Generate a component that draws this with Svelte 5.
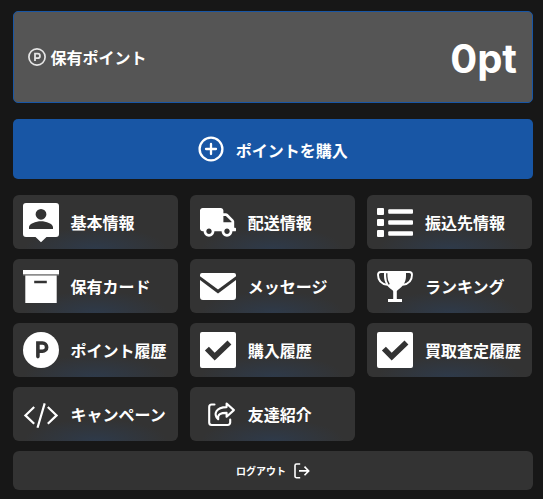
<script lang="ts">
  // My page menu: point balance, purchase button, menu tiles and logout.
  interface MenuItem {
    icon: string;
    label: string;
  }

  const points = 0;

  const items: MenuItem[] = [
    { icon: 'profile', label: '基本情報' },
    { icon: 'truck', label: '配送情報' },
    { icon: 'list', label: '振込先情報' },
    { icon: 'box', label: '保有カード' },
    { icon: 'mail', label: 'メッセージ' },
    { icon: 'trophy', label: 'ランキング' },
    { icon: 'point', label: 'ポイント履歴' },
    { icon: 'check', label: '購入履歴' },
    { icon: 'check', label: '買取査定履歴' },
    { icon: 'code', label: 'キャンペーン' },
    { icon: 'share', label: '友達紹介' },
  ];
</script>

{#snippet icon(name: string)}
  <svg class="icon" viewBox="0 0 36 36" fill="currentColor" aria-hidden="true">
    {#if name === 'profile'}
      <path fill-rule="evenodd" d="M3-1h30a3 3 0 0 1 3 3v28a3 3 0 0 1-3 3h-9.500l-5.500 5.300-5.500-5.300H3a3 3 0 0 1-3-3V2a3 3 0 0 1 3-3zM18 4.900a5.400 5.400 0 1 0 0 10.800 5.400 5.400 0 0 0 0-10.800zM6 25h24v-1.800c0-3.600-7-6-12-6s-12 2.400-12 6z" />
    {:else if name === 'truck'}
      <path transform="translate(0 3.900) scale(.05625)" d="M624 352h-16V243.900c0-12.700-5.100-24.900-14.100-33.900L494 110.100c-9-9-21.200-14.100-33.900-14.100H416V48c0-26.500-21.500-48-48-48H48C21.500 0 0 21.500 0 48v320c0 26.500 21.500 48 48 48h16c0 53 43 96 96 96s96-43 96-96h128c0 53 43 96 96 96s96-43 96-96h48c8.800 0 16-7.200 16-16v-32c0-8.800-7.200-16-16-16zM160 464c-26.500 0-48-21.500-48-48s21.500-48 48-48 48 21.500 48 48-21.500 48-48 48zm320 0c-26.500 0-48-21.500-48-48s21.500-48 48-48 48 21.500 48 48-21.500 48-48 48zm80-208H416V144h44.100l99.900 99.900V256z" />
    {:else if name === 'list'}
      {#each [4, 15, 26] as y}
        <rect x="0" {y} width="7" height="7" rx="1" />
        <rect x="11.200" y={y + 1.200} width="24.800" height="4.500" rx="1" />
      {/each}
    {:else if name === 'box'}
      <path d="M0 2h36v4.300H0z" />
      <path opacity=".35" d="M0 6.300h36v1.200H0z" />
      <path fill-rule="evenodd" d="M2.300 7.500h31.400V35H2.300zM11.200 12.800v2.500h12.600v-2.500z" />
    {:else if name === 'mail'}
      <path d="M2 5h32a2 2 0 0 1 2 2v1.300L18 21.600 0 8.300V7a2 2 0 0 1 2-2z" />
      <path d="M0 12l18 13.400L36 12v17a3 3 0 0 1-3 3H3a3 3 0 0 1-3-3z" />
    {:else if name === 'trophy'}
      <path d="M7 3h22v5c0 6-3 10.500-8.500 14.300-.7.500-.7 1-.7 1.700v7H25v3H11v-3h5.200v-7c0-.7 0-1.200-.7-1.700C10 18.500 7 14 7 8z" />
      <path class="line" stroke-width="1.900" d="M8 4H3.700C1.900 4 1 4.900 1 6.700c0 5.300 3.200 9.300 9.600 10.200M28 4h4.300C34.100 4 35 4.900 35 6.700c0 5.300-3.200 9.300-9.600 10.200" />
      <path class="cut" stroke-width="1.300" d="M9.800 5.200v3c0 3.300.8 5.800 2.400 8.200" />
    {:else if name === 'point'}
      <circle cx="18" cy="18" r="18" />
      <path class="cut" stroke-width="3.600" stroke-linecap="round" d="M14.900 24.600V11h4.600a4.100 4.100 0 0 1 0 8.300h-4.600" />
    {:else if name === 'check'}
      <path fill-rule="evenodd" d="M2 0h32a2 2 0 0 1 2 2v32a2 2 0 0 1-2 2H2a2 2 0 0 1-2-2V2a2 2 0 0 1 2-2zM4.900 18.600l9.800 9.800L31.400 12.400l-3.900-4-12.800 12.300L8.900 14.700z" />
    {:else if name === 'code'}
      <path class="line" stroke-width="2.200" d="M11.200 11L2.400 19.400l8.800 8.400M24.800 11l8.800 8.400-8.800 8.400M21.700 7.400l-7.200 24.400" />
    {:else if name === 'share'}
      <path class="line" stroke-width="2.100" stroke-linecap="round" d="M14.500 8.500h-2.800a2.500 2.500 0 0 0-2.500 2.500v15.500a2.500 2.500 0 0 0 2.500 2.500h16a2.500 2.500 0 0 0 2.500-2.500v-3" />
      <path class="line" stroke-width="2.100" stroke-linejoin="round" d="M26.600 7.500l7.300 6.600-7.300 6.600v-3.800c-5.800 0-9.300 1-8.400 6.400-5.300-5-2.200-12.200 8.400-12.200z" />
    {/if}
  </svg>
{/snippet}

<main class="mypage">
  <section class="balance">
    <p class="balance-label">
      <svg class="point-icon" viewBox="0 0 18 18" aria-hidden="true">
        <circle class="line" cx="9" cy="9" r="8.100" stroke-width="1.700" />
        <path class="line" stroke-width="1.800" d="M7 13V5.700h2.700a2.200 2.200 0 0 1 0 4.500H7" />
      </svg>
      <span>保有ポイント</span>
    </p>
    <p class="balance-value">{points}pt</p>
  </section>

  <button class="buy">
    <svg class="plus-icon" viewBox="0 0 26 26" aria-hidden="true">
      <circle class="line" cx="13" cy="13" r="11.400" stroke-width="2.300" />
      <path class="line" stroke-width="2.300" stroke-linecap="round" d="M13 8v10M8 13h10" />
    </svg>
    <span>ポイントを購入</span>
  </button>

  <nav class="menu">
    {#each items as item}
      <button class="tile">
        {@render icon(item.icon)}
        <span>{item.label}</span>
      </button>
    {/each}
  </nav>

  <button class="logout">
    <span>ログアウト</span>
    <svg class="logout-icon" viewBox="0 0 16 16" aria-hidden="true">
      <path class="line" stroke-width="1.600" d="M6.200 1H2.500A1.500 1.500 0 0 0 1 2.500v10.700a1.500 1.500 0 0 0 1.500 1.500h3.700M5 7.900h9.500M10.500 3.600l4.200 4.300-4.200 4.300" />
    </svg>
  </button>
</main>

<style>
  :global(body) {
    background: #171717;
  }
  .mypage {
    box-sizing: border-box;
    width: 543px;
    height: 499px;
    padding: 11px 10px 0 13px;
    color: #fff;
    font-family: 'Noto Sans CJK JP', sans-serif;
    font-size: 16px;
    font-weight: 700;
  }
  p {
    margin: 0;
  }
  button {
    border: 0;
    padding: 0;
    color: inherit;
    font: inherit;
    white-space: nowrap;
  }
  svg {
    flex: none;
    overflow: visible;
  }
  .line {
    fill: none;
    stroke: currentColor;
  }
  .cut {
    fill: none;
    stroke: #333;
  }
  .balance {
    box-sizing: border-box;
    display: flex;
    align-items: center;
    justify-content: space-between;
    height: 92px;
    padding: 0 15px 0 14px;
    border: 1px solid #1856a5;
    border-radius: 5px;
    background: #555;
  }
  .balance-label {
    display: flex;
    align-items: center;
    gap: 4.500px;
  }
  .point-icon {
    width: 18px;
    height: 18px;
    color: #e6e6e6;
  }
  .balance-value {
    padding-top: 3px;
    font-family: Inter, sans-serif;
    font-size: 40px;
    line-height: 48px;
  }
  .buy {
    display: flex;
    align-items: center;
    justify-content: center;
    gap: 11.500px;
    width: 100%;
    height: 60px;
    margin: 16px 0;
    border-radius: 5px;
    background: #1856a5;
  }
  .buy span {
    padding-top: 2px;
  }
  .plus-icon {
    width: 26px;
    height: 26px;
  }
  .menu {
    display: grid;
    grid-template-columns: repeat(3, 165px);
    grid-auto-rows: 54px;
    gap: 10px 12.200px;
  }
  .tile {
    display: flex;
    align-items: center;
    gap: 11.600px;
    padding-left: 10px;
    border-radius: 6px;
    background: radial-gradient(ellipse 72px 22px at 50% 100%, #2e3a4a, #333 100%);
  }
  .icon {
    width: 36px;
    height: 36px;
  }
  .logout {
    display: flex;
    align-items: center;
    justify-content: center;
    gap: 8px;
    width: 100%;
    height: 39px;
    margin-top: 10px;
    border-radius: 6px;
    background: #333;
    font-size: 10px;
  }
  .logout-icon {
    width: 16px;
    height: 16px;
  }
</style>
